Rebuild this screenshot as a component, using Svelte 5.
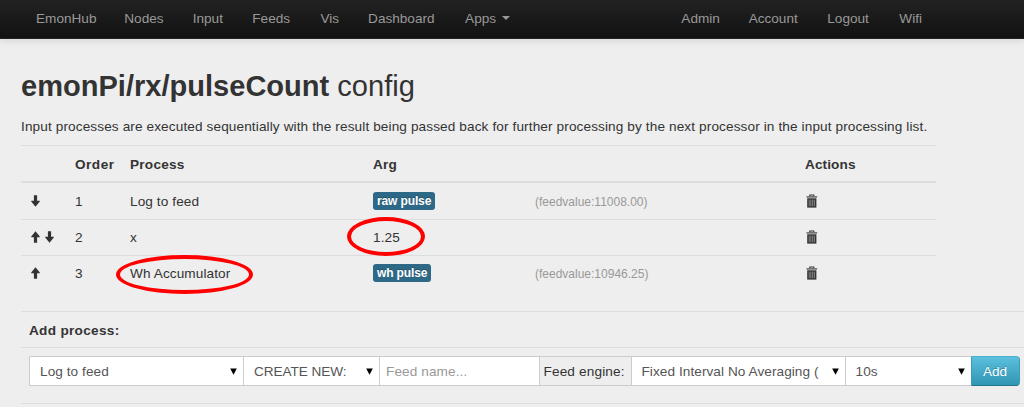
<script>
  const left = ['EmonHub', 'Nodes', 'Input', 'Feeds', 'Vis', 'Dashboard'];
  const right = ['Admin', 'Account', 'Logout', 'Wifi'];
  const rows = [
    { up: false, down: true, order: 1, process: 'Log to feed', feed: 'raw pulse', value: '(feedvalue:11008.00)' },
    { up: true, down: true, order: 2, process: 'x', arg: '1.25', argMarked: true },
    { up: true, down: false, order: 3, process: 'Wh Accumulator', marked: true, feed: 'wh pulse', value: '(feedvalue:10946.25)' }
  ];
</script>

{#snippet arrow(flip)}
  <svg class="arrow" class:flip width="9" height="12" viewBox="0 0 9 12" aria-hidden="true">
    <path d="M4.5 .2 8.8 5.5V6.3H6.1V11.8H2.9V6.3H.2V5.5Z" />
  </svg>
{/snippet}

{#snippet trash()}
  <svg class="trash" width="12" height="14" viewBox="0 0 12 14" aria-hidden="true">
    <path d="M3.8 2.1V1H7.8V2.1" fill="none" stroke="#333" stroke-width="1.1" />
    <path d="M.5 2.2H11.1V3.6H.5Z" fill="#555" />
    <path d="M1.2 4.3H10.4V13.6H1.2Z" fill="#333" />
    <path d="M3.2 5.6V12.3M4.9 5.6V12.3M6.7 5.6V12.3M8.4 5.6V12.3" stroke="#999" stroke-width=".8" />
  </svg>
{/snippet}

{#snippet select(text, cls)}
  <div class="field select {cls}">
    <span>{text}</span>
    <svg width="7" height="7" viewBox="0 0 7 7" aria-hidden="true"><path d="M.2 .4H6.8L3.5 6.8Z" /></svg>
  </div>
{/snippet}

<nav>
  <div class="links primary">
    {#each left as item}<span>{item}</span>{/each}
    <span>Apps<i class="caret"></i></span>
  </div>
  <div class="links account">
    {#each right as item}<span>{item}</span>{/each}
  </div>
</nav>

<main>
  <h2><b>emonPi/rx/pulseCount</b> config</h2>
  <p>Input processes are executed sequentially with the result being passed back for further processing by the next processor in the input processing list.</p>

  <section class="list">
    <div class="row head">
      <span></span><span>Order</span><span>Process</span><span>Arg</span><span></span><span>Actions</span>
    </div>
    {#each rows as r}
      <div class="row">
        <span class="arrows">{#if r.up}{@render arrow(false)}{/if}{#if r.down}{@render arrow(true)}{/if}</span>
        <span>{r.order}</span>
        <span class="cell">{r.process}{#if r.marked}<i class="ring wide"></i>{/if}</span>
        <span class="cell">{#if r.feed}<em class="label">{r.feed}</em>{:else}{r.arg}{/if}{#if r.argMarked}<i class="ring"></i>{/if}</span>
        <span class="value">{r.value ?? ''}</span>
        <span class="act">{@render trash()}</span>
      </div>
    {/each}
  </section>

  <section class="add">
    <div class="title">Add process:</div>
    <div class="form">
      {@render select('Log to feed', 'process')}
      {@render select('CREATE NEW:', 'feed')}
      <div class="field name"><span>Feed name...</span></div>
      <div class="field addon"><span>Feed engine:</span></div>
      {@render select('Fixed Interval No Averaging (', 'engine')}
      {@render select('10s', 'interval')}
      <button>Add</button>
    </div>
  </section>
</main>

<style>
  :global(body) {
    background: #eee;
    overflow: hidden;
  }
  nav, main {
    font: 13.6px/20px "Liberation Sans", Arial, sans-serif;
    color: #333;
  }
  nav {
    box-sizing: border-box;
    height: 39px;
    display: flex;
    padding: 0 101.4px 0 36px;
    justify-content: space-between;
    align-items: center;
    background: linear-gradient(#222, #111);
    border-bottom: 1px solid #222;
    box-shadow: 0 1px 8px rgba(0, 0, 0, .12);
    color: #999;
  }
  .links {
    display: grid;
    white-space: nowrap;
  }
  .primary {
    grid-template-columns: 88.3px 68.4px 59.6px 68.1px 47.7px 97px auto;
  }
  .account {
    grid-template-columns: 67.3px 78.7px 72px 23.3px;
  }
  .caret {
    display: inline-block;
    border: 4px solid transparent;
    border-top-color: #999;
    border-bottom: 0;
    margin-left: 6px;
    vertical-align: 3px;
  }
  main {
    padding-left: 21px;
  }
  h2 {
    margin: 0;
    padding-top: 28px;
    font-size: 29.05px;
    line-height: 39px;
    font-weight: 400;
  }
  p {
    margin: 0;
    padding: 11px 0 8px;
    white-space: nowrap;
    letter-spacing: .118px;
  }
  .list {
    width: 915px;
    letter-spacing: .1px;
  }
  .row {
    display: grid;
    grid-template-columns: 54px 55px 243px 162px 270px 1fr;
    box-sizing: border-box;
    height: 36px;
    border-top: 1px solid #ddd;
    padding-top: 1px;
    align-items: center;
  }
  .row.head {
    font-weight: 700;
    padding-top: 2px;
    letter-spacing: .25px;
  }
  .row.head span:nth-child(2) {
    letter-spacing: .5px;
  }
  .row.head span:last-child {
    letter-spacing: .1px;
  }
  .head + .row {
    height: 38px;
    border-top-width: 2px;
  }
  .arrows {
    display: flex;
    gap: 5px;
    padding-left: 10px;
    margin-top: -2px;
  }
  .arrow {
    fill: #333;
  }
  .flip {
    transform: rotate(180deg);
  }
  .cell {
    position: relative;
  }
  .label {
    display: inline-block;
    font: 700 12px/14px "Liberation Sans", Arial, sans-serif;
    letter-spacing: -.13px;
    padding: 2px 4px;
    border-radius: 3px;
    background: #2d6987;
    color: #fff;
    text-shadow: 0 -1px 0 rgba(0, 0, 0, .25);
    vertical-align: 1px;
  }
  .value {
    font-size: 12px;
    letter-spacing: 0;
    color: #999;
  }
  .act {
    display: flex;
    padding-left: 1.2px;
  }
  .trash {
    margin-top: -2px;
  }
  .ring {
    position: absolute;
    box-sizing: border-box;
    left: -26.5px;
    top: -11px;
    width: 78px;
    height: 39px;
    border: 4px solid #f00;
    border-radius: 50%;
  }
  .ring.wide {
    left: -14px;
    top: -9px;
    width: 137px;
  }
  .add {
    margin-top: 20px;
    border-top: 1px solid #ddd;
  }
  .title {
    font-weight: 700;
    letter-spacing: .3px;
    padding-left: 8px;
    height: 35px;
    line-height: 37px;
    border-bottom: 1px solid #ddd;
  }
  .form {
    display: flex;
    padding: 8px 0 17px 8px;
    border-bottom: 1px solid #ddd;
  }
  .field {
    box-sizing: border-box;
    height: 30px;
    border: 1px solid #ccc;
    margin-right: -1px;
    background: #fff;
    color: #555;
    display: flex;
    align-items: center;
    white-space: nowrap;
  }
  .field span {
    padding-top: 1px;
  }
  .select {
    justify-content: space-between;
    padding: 0 6px 0 10px;
    letter-spacing: .07px;
  }
  .process { width: 215px; }
  .feed {
    width: 137px;
    letter-spacing: -.05px;
  }
  .name {
    width: 160.5px;
    padding-left: 6px;
    color: #999;
    letter-spacing: .1px;
  }
  .addon {
    width: 93px;
    background: #eee;
    color: #333;
    padding-left: 4px;
    letter-spacing: .15px;
  }
  .engine { width: 215px; }
  .interval { width: 127px; }
  button {
    box-sizing: border-box;
    width: 49px;
    height: 30px;
    padding: 1px 0 0;
    border: 1px solid #2f96b4;
    border-color: #4bb0cc #3a9cb8 #24748c;
    border-radius: 0 4px 4px 0;
    background: linear-gradient(#5bc0de, #2f96b4);
    color: #fff;
    font: inherit;
    text-shadow: 0 -1px 0 rgba(0, 0, 0, .25);
    position: relative;
  }
</style>
